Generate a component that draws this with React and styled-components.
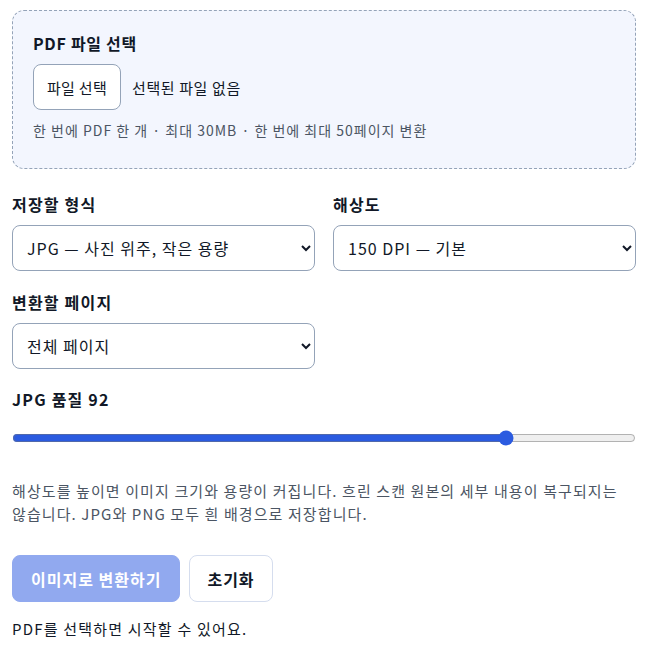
import React, { useState } from "react";
import styled, { createGlobalStyle } from "styled-components";

const Global = createGlobalStyle`
  body {
    margin: 0;
    padding: 10px 16px 0 12px;
    font-family: "Noto Sans CJK KR", "Noto Sans", sans-serif;
    color: #111827;
    background: #fff;
    word-break: keep-all;
  }
`;

function App() {
  const [quality, setQuality] = useState(92);

  return (
    <>
      <Global />
      <Page>
        <DropZone>
          <Title>PDF 파일 선택</Title>
          <FileRow>
            <FileButton type="button">파일 선택</FileButton>
            <FileName>선택된 파일 없음</FileName>
          </FileRow>
          <Hint>한 번에 PDF 한 개 · 최대 30MB · 한 번에 최대 50페이지 변환</Hint>
        </DropZone>

        <FieldGrid>
          <Field>
            <Label>저장할 형식</Label>
            <Select defaultValue="jpg">
              <option value="jpg">JPG — 사진 위주, 작은 용량</option>
              <option value="png">PNG — 선명한 글자, 큰 용량</option>
            </Select>
          </Field>
          <Field>
            <Label>해상도</Label>
            <Select defaultValue="150">
              <option value="72">72 DPI — 미리보기</option>
              <option value="150">150 DPI — 기본</option>
              <option value="300">300 DPI — 인쇄용</option>
            </Select>
          </Field>
          <Field>
            <Label>변환할 페이지</Label>
            <Select defaultValue="all">
              <option value="all">전체 페이지</option>
              <option value="range">페이지 범위 지정</option>
            </Select>
          </Field>
        </FieldGrid>

        <QualityField>
          <Label>JPG 품질 {quality}</Label>
          <Range
            type="range"
            min={60}
            max={100}
            value={quality}
            onChange={(e) => setQuality(Number(e.target.value))}
          />
        </QualityField>

        <Note>
          해상도를 높이면 이미지 크기와 용량이 커집니다. 흐린 스캔 원본의 세부 내용이 복구되지는
          않습니다. JPG와 PNG 모두 흰 배경으로 저장합니다.
        </Note>

        <Actions>
          <Button $primary disabled>이미지로 변환하기</Button>
          <Button>초기화</Button>
        </Actions>

        <Status>PDF를 선택하면 시작할 수 있어요.</Status>
      </Page>
    </>
  );
}

export default App;

const Page = styled.div`
  display: flex;
  flex-direction: column;
  width: 624px;
`;

// 파일 선택 영역
const DropZone = styled.div`
  border: 1px dashed #94a3b8;
  border-radius: 12px;
  background: #f3f6fe;
  padding: 20px 20px 28px;
  display: flex;
  flex-direction: column;
`;

const Title = styled.div`
  font-size: 16px;
  font-weight: 700;
  line-height: 24px;
  letter-spacing: 0.7px;
`;

const FileRow = styled.div`
  display: flex;
  align-items: center;
  gap: 11px;
  margin-top: 9px;
`;

const FileButton = styled.button`
  height: 46px;
  padding: 0 13px;
  background: #fff;
  border: 1px solid #94a3b8;
  border-radius: 8px;
  font-family: inherit;
  font-size: 15px;
  letter-spacing: 0.3px;
  color: #111827;
`;

const FileName = styled.span`
  font-size: 15px;
  letter-spacing: 0.6px;
`;

const Hint = styled.div`
  margin-top: 10px;
  font-size: 14px;
  line-height: 20px;
  letter-spacing: 1px;
  color: #4b5563;
`;

const FieldGrid = styled.div`
  display: grid;
  grid-template-columns: 1fr 1fr;
  column-gap: 18px;
  row-gap: 20px;
  margin-top: 24px;
`;

const Field = styled.div`
  display: flex;
  flex-direction: column;
  gap: 10px;
`;

const QualityField = styled(Field)`
  margin-top: 19px;
  gap: 8px;
`;

const Label = styled.label`
  font-size: 16px;
  font-weight: 700;
  line-height: 22px;
  letter-spacing: 1.2px;
`;

const Select = styled.select`
  height: 46px;
  padding: 0 10px;
  border: 1px solid #94a3b8;
  border-radius: 8px;
  background: #fff;
  font-family: inherit;
  font-size: 16px;
  letter-spacing: 1px;
  color: #111827;
`;

const Range = styled.input`
  margin: 12px 0 0;
  width: 100%;
  accent-color: #2b5be0;
`;

const Note = styled.p`
  margin: 33px 0 0;
  font-size: 15px;
  line-height: 23px;
  letter-spacing: 1.1px;
  color: #4b5563;
`;

const Actions = styled.div`
  display: flex;
  gap: 9px;
  margin-top: 30px;
`;

const Button = styled.button`
  height: 47px;
  padding: 0 ${(p) => (p.$primary ? "18px" : "17px")};
  border-radius: 8px;
  font-family: inherit;
  font-size: 16px;
  font-weight: 700;
  letter-spacing: 1px;
  border: 1px solid ${(p) => (p.$primary ? "#91a9ef" : "#d5ddee")};
  background: ${(p) => (p.$primary ? "#91a9ef" : "#fff")};
  color: ${(p) => (p.$primary ? "#fff" : "#111827")};
`;

const Status = styled.div`
  margin-top: 16px;
  font-size: 15px;
  line-height: 22px;
  letter-spacing: 1.2px;
`;
